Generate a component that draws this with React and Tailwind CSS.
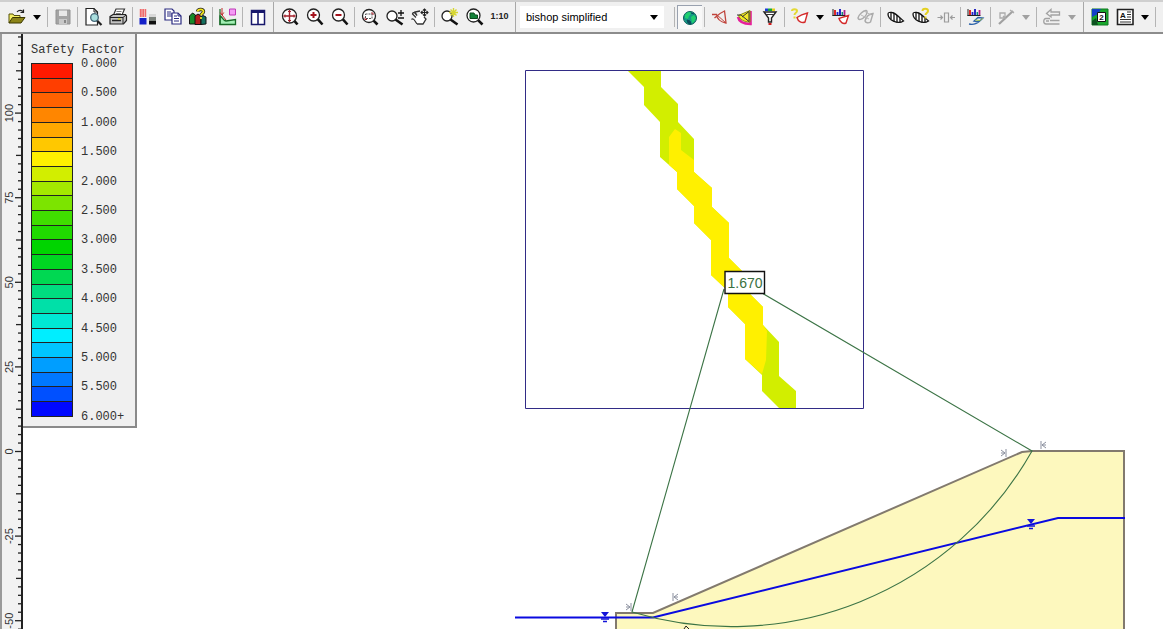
import React, { useState } from "react";

const legendColors = [
  "#ff1900", "#ff3e00", "#ff6200", "#ff8600", "#ffa800", "#ffc800",
  "#fff000", "#d2ee00", "#a4e800", "#7ce400", "#40de00", "#20da00",
  "#00d400", "#00d622", "#00d852", "#00dc80", "#00e0a8", "#00e8d4",
  "#00eeff", "#00c6ff", "#009eff", "#0078ff", "#0050ff", "#0008ff",
];

const legendLabels = [
  "0.000", "0.500", "1.000", "1.500", "2.000", "2.500", "3.000",
  "3.500", "4.000", "4.500", "5.000", "5.500", "6.000+",
];

const methods = ["bishop simplified", "janbu simplified", "spencer", "gle/morgenstern-price"];

function Icon({ children }) {
  return (
    <svg width="20" height="20" viewBox="0 0 20 20" fill="none" stroke="#111" strokeWidth="1">
      {children}
    </svg>
  );
}

function Tool({ label, children, pressed }) {
  return (
    <button
      aria-label={label}
      aria-pressed={pressed}
      className={`flex h-[24px] w-[25px] shrink-0 items-center justify-center ${pressed ? "border-l border-t border-gray-400 bg-[#f8f8f8]" : ""}`}
    >
      {children}
    </button>
  );
}

function Arrow({ label, disabled }) {
  return (
    <button aria-label={label} disabled={disabled} className="flex h-[24px] w-4 shrink-0 items-center justify-center">
      <svg width="8" height="5" viewBox="0 0 8 5">
        <path d="M0 0h8L4 5z" fill={disabled ? "#a0a0a0" : "#000"} />
      </svg>
    </button>
  );
}

const Sep = () => <div className="mx-[2px] h-5 w-px shrink-0 bg-[#b4b4b4]" />;
const GroupSep = () => <div className="mx-[3px] h-full w-px shrink-0 bg-[#a8a8a8]" />;

// magnifier shared by all the zoom tools
function Lens({ cx = 9, cy = 9, r = 5.5, fill = "#fff" }) {
  return (
    <>
      <path d={`M${cx + r * 0.7} ${cy + r * 0.7}L17.5 17.5`} stroke="#111" strokeWidth="2.6" />
      <circle cx={cx} cy={cy} r={r} fill={fill} stroke="#222" strokeWidth="1.3" />
    </>
  );
}

function Bars() {
  return (
    <>
      <path d="M2 2v7M1.5 8.5h13" stroke="#222" />
      <path d="M4 3v5" stroke="#d11" strokeWidth="1.8" />
      <path d="M6.5 5v3" stroke="#22c" strokeWidth="1.8" />
      <path d="M9 2v6" stroke="#11b" strokeWidth="1.8" />
      <path d="M11.3 5v3" stroke="#0a8a7a" strokeWidth="1.5" />
      <path d="M13.5 3v5" stroke="#b0208a" strokeWidth="1.8" />
    </>
  );
}

function Slices() {
  return (
    <>
      <path d="M2 7c0-1.5 2-2 4-1.5 4 .8 7 4.500 11.500 8.500-3 2-7 1.500-10 .2C4 12.500 2 10 2 7z" fill="#fff" stroke="#111" strokeWidth="1.3" />
      <path d="M5 5.500v6.500M8 6v8.500M11 8v7.500M14 11v4.500" stroke="#111" strokeWidth="1.3" />
    </>
  );
}

function Toolbar() {
  const [method, setMethod] = useState(methods[0]);

  return (
    <header className="flex h-[34px] shrink-0 items-center overflow-hidden border-b-2 border-t-2 border-b-[#8c8c8c] border-t-[#cfcfcf] bg-[#f0f0f0] pl-1">
      <Tool label="Open">
        <Icon>
          <path d="M2 16V7h4l1 1.500h6V11" fill="#f4ef62" stroke="#55500a" />
          <path d="M2 16l3.500-5.500H18L14 16z" fill="#8c8418" stroke="#3c3800" />
          <path d="M10 5c2-2.500 4-2 6-.5M16.500 2.500V5.500H13.500" stroke="#222" strokeWidth="1.2" />
        </Icon>
      </Tool>
      <Arrow label="Recent files" />
      <Sep />
      <Tool label="Save">
        <Icon>
          <path d="M3 3h14v14H3z" fill="#a4a4a4" stroke="#929292" />
          <path d="M6 3.500h8V9H6z" fill="#e8e8e8" stroke="none" />
          <path d="M6 12h8v5H6z" fill="#c8c8c8" stroke="none" />
          <path d="M11 13h2v3h-2z" fill="#888" stroke="none" />
        </Icon>
      </Tool>
      <Sep />
      <Tool label="Print preview">
        <Icon>
          <path d="M3 1.500h8l3.500 3.500V18H3z" fill="#fff" stroke="#222" strokeWidth="1.2" />
          <path d="M11 1.500V5h3.500" stroke="#222" />
          <path d="M14 13.500l4.500 4.500" stroke="#222" strokeWidth="2.2" />
          <circle cx="11.500" cy="10.500" r="3.800" fill="#a9dede" stroke="#467" strokeWidth="1.300" />
        </Icon>
      </Tool>
      <Tool label="Print">
        <Icon>
          <path d="M5.500 8L8 2h8.500L14 8z" fill="#fff" stroke="#333" strokeWidth="1.2" />
          <path d="M8.500 4.500h5M7.800 6.500h5" stroke="#777" />
          <path d="M2 9.500L5 7.500h12.500l1 1.500v4.500l-3 3.500H2z" fill="#c2c2c2" stroke="#222" strokeWidth="1.2" />
          <path d="M2 10.500h13l3-2.500M15 10.500V17" stroke="#222" />
          <path d="M4 13.500h9" stroke="#222" strokeWidth="1.5" />
          <path d="M10 12h2.500" stroke="#d8cf20" strokeWidth="1.5" />
        </Icon>
      </Tool>
      <Sep />
      <Tool label="Contour options">
        <Icon>
          <path d="M1.500 2h7v8h-7z" fill="#f2b4b4" stroke="none" />
          <path d="M2 3h6M2 5h6M2 7h6M2 9h6" stroke="#e22" strokeDasharray="1.500 1" />
          <path d="M1.500 11h7v6.500h-7z" fill="#1420c8" stroke="none" />
          <path d="M11 7h7v3h-7z" fill="#d8d8d8" stroke="none" />
          <path d="M11 10h7v4h-7z" fill="#7b817b" stroke="none" />
          <path d="M11 14h7v3.500h-7z" fill="#111" stroke="none" />
        </Icon>
      </Tool>
      <Tool label="Copy">
        <Icon>
          <path d="M2 2h7l2 2v9H2z" fill="#fff" stroke="#2a2a80" strokeWidth="1.2" />
          <path d="M4 5h4M4 7h5M4 9h5" stroke="#2a2a80" />
          <path d="M9 6h6l3 3v8H9z" fill="#fff" stroke="#2a2a80" strokeWidth="1.2" />
          <path d="M11 9h3M11 11.500h5M11 14h5M15 6v3h3" stroke="#2a2a80" />
        </Icon>
      </Tool>
      <Tool label="Help topics">
        <Icon>
          <path d="M1.500 9l3-3 3 2v9h-6z" fill="#168a28" stroke="#111" />
          <path d="M7 9l3-2 3 2v8.500H7z" fill="#b01c1c" stroke="#111" />
          <path d="M13 10l2-1.500 3 1.500v7l-5 .5z" fill="#157060" stroke="#111" />
          <path d="M9.500 4.500C10 2 15.500 1.500 15.500 4.500c0 2-2.500 2-2.500 4" stroke="#222" strokeWidth="3.400" />
          <path d="M9.500 4.500C10 2 15.500 1.500 15.500 4.500c0 2-2.500 2-2.500 4M13 10v2" stroke="#f2e41c" strokeWidth="1.8" />
        </Icon>
      </Tool>
      <Sep />
      <Tool label="Slope region">
        <Icon>
          <path d="M2 9c2 0 2.500 4.500 6 5l9.500-1.500V17.500H2z" fill="#a2efb4" stroke="#176a26" strokeWidth="1.3" />
          <path d="M2 2v15.500h16" stroke="#176a26" strokeWidth="1.2" />
          <path d="M4 1v7M2.200 5.500L4 8l1.800-2.500M4 8l4 5" stroke="#c02a2a" />
          <path d="M11.500 2h6v6h-6z" fill="#f49af4" stroke="#c03ab8" />
        </Icon>
      </Tool>
      <Sep />
      <Tool label="Tile windows">
        <Icon>
          <path d="M3.500 3.500h13v14h-13z" fill="#fff" stroke="#18186c" strokeWidth="1.5" />
          <path d="M3 4.500h14" stroke="#18186c" strokeWidth="3" />
          <path d="M10 4v13" stroke="#18186c" strokeWidth="1.6" />
        </Icon>
      </Tool>
      <GroupSep />
      <Tool label="Zoom extents">
        <Icon>
          <Lens cx={9.5} cy={9} r={7} />
          <path d="M9.500 3v12M3.500 9h12" stroke="#a3222c" strokeWidth="1.4" />
          <path d="M8 4.500h3M8 13.500h3M5 7.500v3M14 7.500v3" stroke="#a3222c" />
        </Icon>
      </Tool>
      <Tool label="Zoom in">
        <Icon>
          <Lens cx={8.5} cy={8} r={6} />
          <path d="M8.500 5v6M5.500 8h6" stroke="#a3121c" strokeWidth="2" />
        </Icon>
      </Tool>
      <Tool label="Zoom out">
        <Icon>
          <Lens cx={8.5} cy={8} r={6} />
          <path d="M5.500 8h6" stroke="#a3121c" strokeWidth="2" />
        </Icon>
      </Tool>
      <Sep />
      <Tool label="Zoom window">
        <Icon>
          <Lens cx={9} cy={9} r={6.5} />
          <path d="M5.500 7h6.500v4.500H5.500z" stroke="#555" strokeDasharray="2 1" />
          <path d="M11 6h2v2M7 12.500H5v-2" stroke="#a3222c" />
        </Icon>
      </Tool>
      <Tool label="Zoom dynamic">
        <Icon>
          <Lens cx={7} cy={9} r={5} />
          <path d="M16 3v6M13 6h6M13 11h6" stroke="#111" strokeWidth="1.3" />
        </Icon>
      </Tool>
      <Tool label="Pan">
        <Icon>
          <path d="M2 13c1-1 2-1 3 0l1-1-2.500-4.500 2-1L8 9l3-2.500 4 3 1 3-3.500 5H7z" fill="#fff" stroke="none" />
          <path d="M1.500 12.500c1-1 2-.8 3.500 1.500l2 3M6 10.500L2.500 7c0-1.500 1.500-1.500 2.500-1l2 2.500L5 5l5-1M14 10l2 2-3 5H7" stroke="#333" strokeWidth="1.3" />
          <path d="M14.500 2v7M11 5.500h7M13 3.500l1.500-1.500L16 3.500M13 7.500L14.500 9 16 7.500M16.500 4L18 5.500 16.500 7M12.500 4L11 5.500 12.500 7" stroke="#222" strokeWidth="1.1" />
        </Icon>
      </Tool>
      <Sep />
      <Tool label="Zoom to highlight">
        <Icon>
          <Lens cx={7} cy={9} r={5} />
          <path d="M13.500 1v9M9 5.500h9M10.500 2.500l6 6M16.500 2.500l-6 6" stroke="#d6d632" strokeWidth="1.4" />
        </Icon>
      </Tool>
      <Tool label="Zoom slope">
        <Icon>
          <Lens cx={8.5} cy={8.5} r={6.5} />
          <path d="M5 11.500V6h4l1 2h2.500v3.500z" fill="#128238" stroke="#0a4a1c" />
        </Icon>
      </Tool>
      <button className="h-[24px] w-[25px] shrink-0 font-['Liberation_Sans',sans-serif] text-[9px] font-bold text-[#222]">
        1:10
      </button>
      <GroupSep />

      <div className="relative ml-px mr-2 h-[22px] w-36 shrink-0">
        <select
          aria-label="Analysis method"
          value={method}
          onChange={(e) => setMethod(e.target.value)}
          className="block h-full w-full appearance-none bg-white pl-[6px] pr-5 font-['Liberation_Sans',sans-serif] text-[11px] leading-[22px] text-black"
        >
          {methods.map((m) => (
            <option key={m}>{m}</option>
          ))}
        </select>
        <svg className="pointer-events-none absolute right-[6px] top-[9px]" width="8" height="5" viewBox="0 0 8 5">
          <path d="M0 0h8L4 5z" fill="#000" />
        </svg>
      </div>

      <Sep />
      <Tool label="Global minimum" pressed>
        <Icon>
          <circle cx="10" cy="10" r="6.500" fill="#149a86" stroke="#0b5c58" />
          <path d="M5 7c1-2 3-3 5-3l1 2-2 2-1 3-3-1zM11 9l3-2 2 3-2 4-2 1z" fill="#1fcf6e" stroke="none" />
          <path d="M7 12l3 1 1 3-3-1zM11 5l3 1" fill="#094c5c" stroke="#094c5c" />
        </Icon>
      </Tool>
      <Sep />
      <Tool label="Minimum surfaces">
        <Icon>
          <path d="M2 7.500h4.500c.5 4 4 7.500 9.500 8.500L14.500 4C11 5.500 8 7.500 4.500 11" stroke="#c0443c" strokeWidth="1.300" />
          <path d="M6.500 7.500L16 16" stroke="#c0443c" />
        </Icon>
      </Tool>
      <Tool label="All surfaces">
        <Icon>
          <path d="M3 10c1 4.500 6 7 12.500 7V4" stroke="#e6209a" strokeWidth="2.6" />
          <path d="M3.500 8.500L15 3.500V15C9 15 5 12.500 3.500 8.500z" fill="#f2e928" stroke="#8c8a10" />
          <path d="M2 8h4l8 6.500V4.500L7 10" stroke="#333" />
        </Icon>
      </Tool>
      <Tool label="Filter surfaces">
        <Icon>
          <path d="M5 1.500h3v2.500H5z" fill="#1a3ad8" stroke="none" />
          <path d="M8 1.500h4v2.500H8z" fill="#14a83a" stroke="none" />
          <path d="M12 1.500h3v2.500h-3z" fill="#e4cf1e" stroke="none" />
          <path d="M4 5h12l-4.500 6v4h-3v-4z" fill="#fff" stroke="#222" strokeWidth="1.4" />
          <path d="M5 7.500h10" stroke="#333" />
          <path d="M8.500 16h3v2h-3z" fill="#d01c1c" stroke="none" />
        </Icon>
      </Tool>
      <Sep />
      <Tool label="Query surface">
        <Icon>
          <path d="M2 4c0-2.500 5-2.500 5 0C7 6 4.500 5.500 4.500 8M4.500 9.500v2" stroke="#e4d934" strokeWidth="2" />
          <path d="M7 10.500C9 9 13 7 17.500 6l-2.500 9c-3 1.500-7-.5-8-4.500z" fill="#fff" stroke="#d42a2a" strokeWidth="1.4" />
        </Icon>
      </Tool>
      <Arrow label="Query options" />
      <Tool label="Graph query">
        <Icon>
          <Bars />
          <path d="M8 11.500c3-1 5-2 9.500-3L15 16c-3 1.500-6-1-7-4.500z" fill="#fff" stroke="#d42a2a" strokeWidth="1.4" />
        </Icon>
      </Tool>
      <Tool label="Delete query">
        <Icon>
          <path d="M2 11c1-4 5-7 8-7.500 2 0 1 4-1.500 6.500S2.500 13.500 2 11zM9 14c1-4 4-7 8-7.500L14.500 15c-2 1.500-5 1-5.500-1z" stroke="#aaa" strokeWidth="1.4" />
          <path d="M5 8l8 4M8 4l7 4" stroke="#b8b8b8" />
        </Icon>
      </Tool>
      <Sep />
      <Tool label="Show slices">
        <Icon><Slices /></Icon>
      </Tool>
      <Tool label="Query slice data">
        <Icon>
          <Slices />
          <path d="M11.500 4c0-3 5.500-3 5.500 0 0 2-2.500 2-2.500 4M14.500 9.500v2" stroke="#e4d020" strokeWidth="2" />
        </Icon>
      </Tool>
      <Tool label="Slice width">
        <Icon>
          <path d="M8.500 6h4v9h-4zM1.500 10.500h5M4.500 8.500l2 2-2 2M19 10.500h-4.500M16.500 8.500l-2 2 2 2" stroke="#9c9c9c" strokeWidth="1.2" />
        </Icon>
      </Tool>
      <Sep />
      <Tool label="Graph slope data">
        <Icon>
          <Bars />
          <path d="M3 17c5 1 8 0 14-6l-5-.5L8 14l5 1" stroke="#2c62a8" strokeWidth="1.3" />
          <path d="M9 13l5 .5 3-2.500" stroke="#96b84a" />
        </Icon>
      </Tool>
      <Sep />
      <Tool label="Measure">
        <Icon>
          <path d="M3 17L17 4" stroke="#a0a0a0" strokeWidth="2.2" />
          <path d="M4 6h5v5H4zM7 9l3 3M14 3l4 3" stroke="#ababab" strokeWidth="1.3" />
        </Icon>
      </Tool>
      <Arrow label="Measure options" disabled />
      <Sep />
      <Tool label="Loads">
        <Icon>
          <path d="M17.500 5H9V2.500L4.500 6.500 9 10V8h8.500z" stroke="#a2a2a2" strokeWidth="1.3" />
          <path d="M8 11.500H4c-3 0-3 5.500 0 5.500h13.500M4 14h3M8 13.500h9.500" stroke="#a2a2a2" strokeWidth="1.3" />
        </Icon>
      </Tool>
      <Arrow label="Load options" disabled />
      <GroupSep />
      <Tool label="View 2">
        <Icon>
          <path d="M2 2h16v16H2z" fill="#18a82c" stroke="#0f7a20" />
          <path d="M2 2h9l-3 5-6 3z" fill="#1440c8" stroke="none" />
          <path d="M2 14l4-3 2 7H2z" fill="#0d5220" stroke="none" />
          <path d="M7.500 5.500h8v9h-8z" fill="#fff" stroke="#111" />
          <text x="11.500" y="13" textAnchor="middle" fontSize="8" fontWeight="bold" fontFamily="Liberation Sans, sans-serif" fill="#111" stroke="none">2</text>
        </Icon>
      </Tool>
      <Tool label="Add text">
        <Icon>
          <path d="M2.500 2.500h15.500v15H2.500z" fill="#fff" stroke="#222" strokeWidth="1.6" />
          <path d="M12 5h4M12 7.500h4M12 10h4M5 12.500h11M5 15h11" stroke="#333" strokeWidth="1.2" />
          <text x="8" y="10.500" textAnchor="middle" fontSize="8" fontWeight="bold" fontFamily="Liberation Sans, sans-serif" fill="#111" stroke="none">A</text>
        </Icon>
      </Tool>
      <Arrow label="Text options" />
      <Sep />
    </header>
  );
}

// one tick every 2.5 units, zero elevation at y = 417
const zeroY = 417.5;
const tickStep = 8.46;

function Ruler() {
  const ticks = [];
  for (let i = -49; i <= 24; i++) {
    const y = zeroY + i * tickStep;
    const len = i % 10 === 0 ? 6 : i % 5 === 0 ? 5 : 3;
    ticks.push(<path key={i} d={`M${19 - len} ${y}H19`} stroke="#222" strokeWidth="1.3" />);
  }

  return (
    <aside className="w-[23px] shrink-0 overflow-hidden border-l-2 border-r-2 border-l-[#9a9a9a] border-r-[#222] bg-[#f2f2f2]">
      <svg width="19" height="100%" className="block">
        {ticks}
        {[100, 75, 50, 25, 0, -25, -50].map((v) => (
          <text
            key={v}
            transform={`translate(11 ${zeroY - (v / 2.5) * tickStep}) rotate(-90)`}
            textAnchor="middle"
            fontSize="11"
            fontFamily="Liberation Sans, sans-serif"
            fill="#333"
          >
            {v}
          </text>
        ))}
      </svg>
    </aside>
  );
}

function Legend() {
  return (
    <section className="relative w-[114px] border-b-2 border-r-2 border-[#8a8a8a] bg-[#f0f0f0] pb-[9px] pl-2 font-['Liberation_Mono',monospace] text-[12px] leading-4 text-[#333]">
      <h2 className="whitespace-nowrap pt-2">Safety Factor</h2>
      <div className="mt-[5px] flex">
        <div className="flex h-[354px] w-[42px] flex-col border border-[#222]">
          {legendColors.map((c, i) => (
            <div
              key={c}
              className={`flex-1 ${i > 0 ? "border-t border-[#222]" : ""}`}
              style={{ backgroundColor: c }}
            />
          ))}
        </div>
        <ul className="-mb-2 -mt-[7px] ml-2 flex flex-col justify-between">
          {legendLabels.map((l) => (
            <li key={l}>{l}</li>
          ))}
        </ul>
      </div>
    </section>
  );
}

function LimitMark({ x, y, flip }) {
  return (
    <path
      d={flip ? "M-2-4V4M3-3L-1 0 3 3M-1 0H3" : "M2-4V4M-3-3L1 0-3 3M-3 0H1"}
      transform={`translate(${x} ${y})`}
      stroke="#8a8f9e"
      fill="none"
    />
  );
}

function WaterMark({ x, y }) {
  return (
    <g transform={`translate(${x} ${y})`}>
      <path d="M-4-5H4L0 0z" fill="#1414d8" />
      <path d="M-4 2H4M-2 4.500H2" stroke="#1414d8" strokeWidth="1.300" />
    </g>
  );
}

function SlopeView() {
  return (
    <svg
      className="absolute inset-0 h-full w-full"
      viewBox="23 34 1140 595"
      preserveAspectRatio="xMinYMin slice"
      fill="none"
    >
      {/* soil */}
      <path d="M616 640V613H653L1022 452L1032 451H1124V640z" fill="#fdf8be" stroke="#827a6e" strokeWidth="2" />

      {/* centre grid contours */}
      <path
        d="M628 71L644 87V105L660 122V157L677 172V189L694 206V223L711 240V275L728 291V307L745 324V359L762 375V391L779 408H796V391L779 376V342L763 325V307L746 290L745 274L729 258V223L712 207V188L694 172V139L678 122V104L661 87V71z"
        fill="#d2ee00"
      />
      <path
        d="M669 137L675 129L681 133V150L694 160V172L712 188V207L729 223V258L745 274L746 290L763 307V325L767 331L766 360L762 374L745 359V324L728 307V291L711 275V240L694 223V206L677 189V172L669 165z"
        fill="#fff000"
      />
      <path d="M525.5 70.5H863.5V408.5H525.5z" stroke="#322c86" />

      {/* water table */}
      <path d="M515 617.5H653L1058 518H1125" stroke="#0a0ae0" strokeWidth="2" />
      <WaterMark x={605} y={617} />
      <WaterMark x={1031} y={524} />

      {/* critical slip surface */}
      <path d="M724 289L632 612A345 345 0 0 0 1032 451L762 293" stroke="#3c7446" strokeWidth="1.1" />
      <path d="M684 629L686 626L689 629" stroke="#222" />

      <LimitMark x={629} y={607} />
      <LimitMark x={675} y={597} flip />
      <LimitMark x={1004} y={453} />
      <LimitMark x={1043} y={445} flip />

      <path d="M725 271.5H764.5V293.5H725z" fill="#fff" stroke="#111" strokeWidth="1.4" />
      <text x="745" y="288" textAnchor="middle" fontSize="14" fontFamily="Liberation Sans, sans-serif" fill="#3a7040">
        1.670
      </text>
    </svg>
  );
}

export default function App() {
  return (
    <div className="flex h-screen flex-col overflow-hidden bg-white">
      <Toolbar />
      <div className="flex min-h-0 flex-1">
        <Ruler />
        <main className="relative flex-1 overflow-hidden">
          <SlopeView />
          <Legend />
        </main>
      </div>
    </div>
  );
}
